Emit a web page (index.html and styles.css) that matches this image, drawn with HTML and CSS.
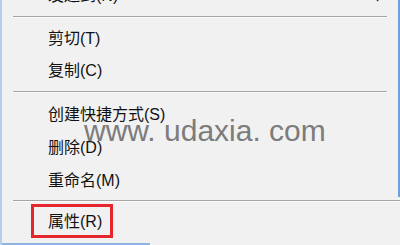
FILE: index.html
```html
<!DOCTYPE html>
<html lang="zh-CN">
<head>
<meta charset="utf-8">
<title>右键菜单</title>
<link rel="stylesheet" href="styles.css">
</head>
<body>
<div class="screen">
  <div class="menu-top">
    <div class="item item-first">
      <span class="label">发送到(N)</span>
      <svg class="arrow" width="7" height="12" viewBox="0 0 7 12"><path d="M1 1 L6 6 L1 11" fill="none" stroke="#333" stroke-width="1.4"/></svg>
    </div>
    <div class="sep"></div>
    <div class="item"><span class="label">剪切(T)</span></div>
    <div class="item"><span class="label">复制(C)</span></div>
    <div class="sep"></div>
    <div class="item item-tall"><span class="label">创建快捷方式(S)</span></div>
    <div class="item item-tall"><span class="label">删除(D)</span></div>
    <div class="item item-tall"><span class="label">重命名(M)</span></div>
  </div>
  <div class="menu-bottom">
    <div class="sep sep-wide"></div>
    <div class="item"><span class="label boxed">属性(R)</span></div>
  </div>
  <div class="bottom-edge"></div>
  <div class="watermark">www. udaxia. com</div>
</div>
</body>
</html>
```
FILE: styles.css
```css
html, body {
  margin: 0;
  padding: 0;
}
body {
  width: 400px;
  height: 245px;
  overflow: hidden;
  background: #f1f1f1;
  font-family: "Liberation Sans", "Noto Sans CJK SC", sans-serif;
}
.screen {
  position: relative;
  width: 400px;
  height: 245px;
  overflow: hidden;
  box-sizing: border-box;
  border-left: 2px solid #b4cdea;
  display: flex;
  flex-direction: column;
}
.menu-top {
  margin-top: -20px;
  border-right: 2px solid #6f9fdc;
  display: flex;
  flex-direction: column;
}
.menu-bottom {
  display: flex;
  flex-direction: column;
}
.item {
  height: 32px;
  flex-shrink: 0;
  display: flex;
  align-items: center;
  padding-left: 46px;
  font-size: 16px;
  color: #111;
}
.item-tall {
  height: 33px;
}
.item-first {
  justify-content: space-between;
  padding-right: 15px;
}
.label {
  line-height: 20px;
  white-space: nowrap;
}
.sep {
  height: 11px;
  flex-shrink: 0;
  box-sizing: border-box;
  padding-top: 4px;
  margin: 0 11px 0 11px;
}
.sep::before {
  content: "";
  display: block;
  height: 1px;
  background: #a6a6a6;
  border-bottom: 1px solid #fbfbfb;
}
.sep-wide {
  height: 10px;
  padding-top: 3px;
  margin-right: 0;
  margin-left: 11px;
}
.boxed {
  display: inline-block;
  box-sizing: border-box;
  height: 34px;
  line-height: 26px;
  padding: 2px 8px 0 14px;
  margin: -3px 0 1px -17px;
  border: 3px solid #e5262d;
}
.bottom-edge {
  margin-top: auto;
  width: 150px;
  height: 2px;
  margin-left: -2px;
  background: #8fb4e3;
}
.watermark {
  position: absolute;
  left: 82px;
  top: 116px;
  font-family: "Liberation Sans", sans-serif;
  font-size: 30px;
  line-height: 30px;
  color: #767676;
  opacity: 0.95;
  white-space: pre;
  pointer-events: none;
}
```
